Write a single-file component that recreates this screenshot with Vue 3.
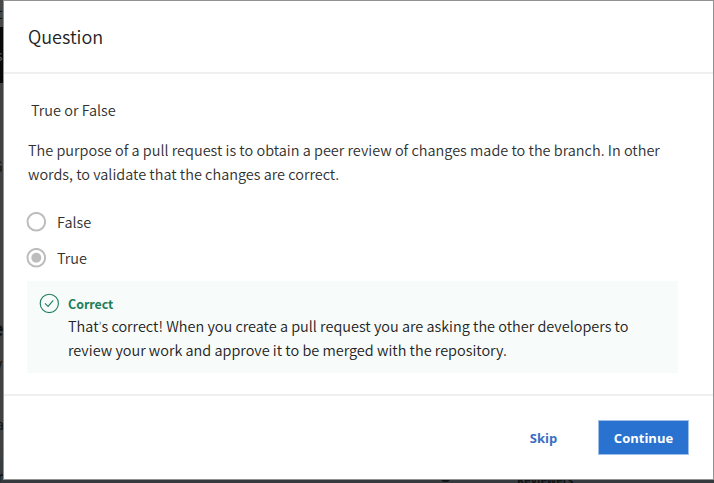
<script setup>
import { ref } from 'vue'

const answer = ref('True')
const options = ['False', 'True']
</script>

<template>
  <div class="page">
    <span class="ghost g1">t</span>
    <span class="ghost g2">s</span>
    <span class="ghost g3">G</span>
    <span class="ghost g4">e</span>
    <span class="ghost g5">V</span>
    <span class="ghost g6">a</span>
    <span class="ghost g7">r</span>
    <span class="ghost dot"></span>
    <span class="ghost g8">Reviewers</span>
    <section class="modal">
      <header class="head"><h1>Question</h1></header>
      <main class="body">
        <p class="kind">True or False</p>
        <p class="prompt">The purpose of a pull request is to obtain a peer review of changes made to the branch. In other<br />words, to validate that the changes are correct.</p>
        <div class="options">
          <label v-for="o in options" :key="o" class="option" @click="answer = o">
            <svg class="radio" width="20" height="20" viewBox="0 0 20 20">
              <circle cx="10.3" cy="9.7" r="8.8" fill="none" stroke="#bdbdbd" stroke-width="2" />
              <circle v-if="answer === o" cx="10.3" cy="9.7" r="5" fill="#bdbdbd" />
            </svg>
            <span>{{ o }}</span>
          </label>
        </div>
        <div class="feedback">
          <svg class="check" width="20" height="20" viewBox="0 0 20 20" fill="none" stroke="#1f7f5c">
            <circle cx="10.3" cy="10.4" r="9.1" stroke-width="1.1" />
            <path d="M6 10.3 9.1 13.4 14.2 7.4" stroke-width="1.1" />
          </svg>
          <div class="message">
            <strong>Correct</strong>
            <p>That<span class="apos">’</span>s correct! When you create a pull request you are asking the other developers to<br />review your work and approve it to be merged with the repository.</p>
          </div>
        </div>
      </main>
      <footer class="foot">
        <button class="skip">Skip</button>
        <button class="continue">Continue</button>
      </footer>
    </section>
  </div>
</template>

<style>
body {
  margin: 0;
  overflow: hidden;
}
</style>

<style scoped>
.page {
  position: relative;
  box-sizing: border-box;
  width: 714px;
  height: 483px;
  padding: 0 0 3px 3px;
  overflow: hidden;
  background: linear-gradient(to bottom, #484848 0 27px, #090909 27px 83px, #414141 83px 440px, #343a3d 100%);
  font-family: "Noto Sans CJK SC", "Noto Sans", sans-serif;
  font-weight: 350;
  color: #303030;
}
.modal {
  position: relative;
  display: flex;
  flex-direction: column;
  box-sizing: border-box;
  width: 711px;
  height: 480px;
  border: 1px solid #929292;
  background: #fff;
}
.head {
  box-sizing: border-box;
  height: 73px;
  padding: 20px 24px 0;
  border-bottom: 2px solid #efefef;
}
h1 {
  margin: 0;
  font-size: 18px;
  font-weight: 350;
  line-height: 30px;
  color: #222;
}
p {
  margin: 0;
  font-size: 14.47px;
  line-height: 24px;
  white-space: nowrap;
}
.body {
  box-sizing: border-box;
  height: 320px;
  padding: 24px 34px 0 24px;
}
.kind {
  padding-left: 3px;
}
.prompt {
  margin-top: 16px;
}
.options {
  display: flex;
  flex-direction: column;
  gap: 12px;
  margin-top: 24px;
}
.option {
  display: flex;
  align-items: center;
  gap: 11px;
  height: 24px;
  margin-left: -2px;
  font-size: 14.5px;
  line-height: 24px;
}
.radio {
  flex: none;
}
.feedback {
  display: flex;
  gap: 9px;
  box-sizing: border-box;
  width: 651px;
  height: 92px;
  margin: 11px 0 0 -1px;
  padding: 12px;
  background: #f7fbfa;
}
.check {
  flex: none;
}
.message strong {
  display: block;
  height: 21px;
  font-size: 12.4px;
  line-height: 22px;
  font-weight: 700;
  color: #1f7f5c;
}
.message p {
  color: #222;
}
.apos {
  font-family: Lato, sans-serif;
  line-height: 1px;
}
.foot {
  display: flex;
  justify-content: flex-end;
  align-items: flex-start;
  gap: 25px;
  flex: 1;
  padding: 24px 25px 0;
  border-top: 2px solid #efefef;
}
button {
  box-sizing: border-box;
  height: 35px;
  padding: 0 0 0 1px;
  border: 0;
  font: 700 13px/34px "Open Sans", sans-serif;
}
.skip {
  width: 60px;
  background: none;
  color: #3a6fc4;
}
.continue {
  width: 91px;
  margin-right: -1px;
  padding: 0;
  border: 1px solid #9dbfea;
  line-height: 32px;
  background: #2972d0;
  color: #fff;
}
.ghost {
  position: absolute;
  font-size: 14px;
  font-weight: 400;
  line-height: 20px;
  color: #111;
}
.g1 { left: -3px; top: 3px; }
.g2 { left: -4px; top: 45px; color: #555; }
.g3 { left: -7px; top: 156px; }
.g4 { left: -8px; top: 318px; font-size: 20px; font-weight: 700; }
.g5 { left: -6px; top: 356px; }
.g6 { left: -4px; top: 414px; }
.g7 { left: -3px; top: 466px; font-weight: 700; }
.g8 { left: 517px; top: 472px; font: 700 11px/16px "Open Sans", sans-serif; }
.dot {
  left: 440px;
  top: 471px;
  width: 11px;
  height: 11px;
  border-radius: 50%;
  background: #111;
}
</style>
